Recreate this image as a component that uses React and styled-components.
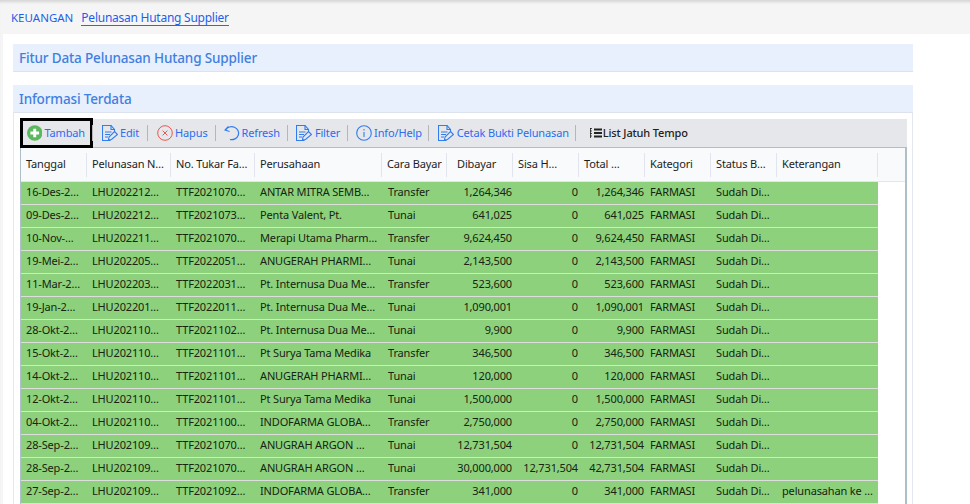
import React from 'react';
import styled, { createGlobalStyle } from 'styled-components';

const GlobalStyle = createGlobalStyle`
  html, body {
    margin: 0;
    height: 100%;
    overflow: hidden;
    background: #f5f5f5;
    font-family: "Noto Sans", "Open Sans", sans-serif;
  }
`;

const Page = styled.div`
  height: 504px;
  overflow: hidden;
  box-shadow: inset 0 4px 3px -2px #d4d4d4;
`;

const Breadcrumb = styled.nav`
  height: 34px;
  box-sizing: border-box;
  padding: 10px 0 0 11px;
  display: flex;
  align-items: flex-start;
  gap: 8px;
  color: #1f5fe8;
`;

const Crumb = styled.span`
  font-size: 11.5px;
  line-height: 16px;
`;

const CrumbLink = styled.a`
  font-size: 12px;
  line-height: 15px;
  letter-spacing: -0.25px;
  color: #1f5fe8;
  border-bottom: 1px solid #1f6cf0;
`;

const Content = styled.main`
  margin-left: 3px;
  height: 470px;
  box-sizing: border-box;
  background: #fff;
  padding: 10px 57px 0 10px;
`;

const Heading = styled.h2`
  margin: 0;
  height: 28px;
  box-sizing: border-box;
  padding-left: 6px;
  background: #e8effd;
  border-bottom: 1px solid #dde3ec;
  color: #3f7fe0;
  font-size: 13.5px;
  font-weight: 500;
  letter-spacing: -0.15px;
  line-height: 28px;
`;

const Panel = styled.section`
  margin-top: 13px;
`;

const PanelBody = styled.div`
  border: solid #e3e8f0;
  border-width: 0 1px;
  padding: 6px 5px 0 6px;
`;

const Toolbar = styled.div`
  height: 28px;
  background: #e6e7eb;
  display: flex;
  align-items: center;
`;

const ToolButton = styled.button`
  all: unset;
  display: flex;
  align-items: center;
  gap: ${({ $gap }) => $gap ?? 2}px;
  height: 100%;
  box-sizing: border-box;
  padding: 0 ${({ $pr }) => $pr ?? 7}px 0 ${({ $pl }) => $pl ?? 8}px;
  color: ${({ $dark }) => ($dark ? '#222' : '#2b6cf0')};
  font-size: 11px;
  font-weight: ${({ $dark }) => ($dark ? 500 : 400)};
  letter-spacing: -0.15px;
  white-space: nowrap;
  cursor: pointer;
`;

const FocusedButton = styled(ToolButton)`
  margin-left: 1px;
  width: 71px;
  outline: 3px solid #000;
  outline-offset: -2px;
`;

const ToolLabel = styled.span`
  padding-bottom: 2px;
`;

const Sep = styled.span`
  width: 1px;
  height: 16px;
  background: #b4b6ba;
`;

const Grid = styled.div`
  border: 1px solid #aebfca;
  border-bottom: 0;
  border-right-width: 2px;
  background: #fff;
  font-size: 11px;
  letter-spacing: -0.15px;
`;

const HeaderRow = styled.div`
  display: grid;
  grid-template-columns: 66px 84px 84px 127px 65px 66px 66px 66px 66px 66px 101px;
  height: 34px;
  box-sizing: border-box;
  background: #f8fafb;
  border-bottom: 1px solid #e2e7ec;
  align-items: center;
`;

const HeaderCell = styled.div`
  height: 24px;
  line-height: 22px;
  box-sizing: border-box;
  padding-left: ${({ $pl }) => $pl ?? 5}px;
  border-right: 1px solid #e2e5ee;
  color: #1d1d1d;
  white-space: nowrap;
`;

const Row = styled.div`
  display: grid;
  grid-template-columns: 66px 84px 84px 127px 65px 66px 66px 66px 66px 66px 101px;
  width: 857px;
  height: 23px;
  box-sizing: border-box;
  background: #8dd17d;
  border-bottom: 1px solid #dcdfdc;
`;

const Cell = styled.div`
  line-height: 20px;
  padding: 0 ${({ $num }) => ($num ? 1 : 0)}px 0 ${({ $pl }) => $pl ?? 5}px;
  color: #17240f;
  text-align: ${({ $num }) => ($num ? 'right' : 'left')};
  white-space: nowrap;
`;

const DocIcon = () => (
  <svg width="16" height="17" viewBox="0 0 16 17" fill="none" stroke="#2f7df0" strokeWidth="1.1">
    <path d="M8.5 15.5H0.5V0.5H9L12.5 4.5V6.5" />
    <path d="M9 0.5V4.5H12.5" />
    <path d="M3 7H9.5M3 9.5H8M3 12H6" />
    <path d="M12.5 6.5L15.5 9.5L9.5 14.5L6.5 15L7 12Z" />
  </svg>
);

const PlusIcon = () => (
  <svg width="16" height="16" viewBox="0 0 16 16">
    <circle cx="8" cy="8" r="8" fill="#5cb85c" />
    <path d="M8 3.5V12.5M3.5 8H12.5" stroke="#fff" strokeWidth="3" />
  </svg>
);

const CrossIcon = () => (
  <svg width="16" height="16" viewBox="0 0 16 16" fill="none" stroke="#e8574f">
    <circle cx="8" cy="8" r="7.3" />
    <path d="M5.6 5.6L10.4 10.4M10.4 5.6L5.6 10.4" />
  </svg>
);

const RefreshIcon = () => (
  <svg width="16" height="16" viewBox="0 0 16 16" fill="none" stroke="#2f7df0" strokeWidth="1.2">
    <path d="M4.5 1.5L1 5L5.5 6.5" />
    <path d="M1.5 5A7 6.5 0 1 1 6 14.5" />
  </svg>
);

const InfoIcon = () => (
  <svg width="16" height="16" viewBox="0 0 16 16" fill="none" stroke="#2f7df0" strokeWidth="1.1">
    <circle cx="8" cy="8" r="7.3" />
    <path d="M8 7V12M8 4V5.4" />
  </svg>
);

const ListIcon = () => (
  <svg width="12" height="12" viewBox="0 0 12 12" fill="none" stroke="#222">
    <path d="M4 2.5H12M4 6H12M4 9.5H12" strokeWidth="1.8" />
    <path d="M0.5 1V11M0 1.5H2M0 4H2M0 6.5H2M0 9H2" strokeWidth="0.8" />
  </svg>
);

const columns = [
  { label: 'Tanggal' },
  { label: 'Pelunasan N…' },
  { label: 'No. Tukar Fa…' },
  { label: 'Perusahaan' },
  { label: 'Cara Bayar' },
  { label: 'Dibayar', pl: 10 },
  { label: 'Sisa H…' },
  { label: 'Total …' },
  { label: 'Kategori' },
  { label: 'Status B…' },
  { label: 'Keterangan' },
];

const rows = [
  ['16-Des-2…', 'LHU202212…', 'TTF2021070…', 'ANTAR MITRA SEMB…', 'Transfer', '1,264,346', '0', '1,264,346', ''],
  ['09-Des-2…', 'LHU202212…', 'TTF2021073…', 'Penta Valent, Pt.', 'Tunai', '641,025', '0', '641,025', ''],
  ['10-Nov-…', 'LHU202211…', 'TTF2021070…', 'Merapi Utama Pharm…', 'Transfer', '9,624,450', '0', '9,624,450', ''],
  ['19-Mei-2…', 'LHU202205…', 'TTF2022051…', 'ANUGERAH PHARMI…', 'Tunai', '2,143,500', '0', '2,143,500', ''],
  ['11-Mar-2…', 'LHU202203…', 'TTF2022031…', 'Pt. Internusa Dua Me…', 'Transfer', '523,600', '0', '523,600', ''],
  ['19-Jan-2…', 'LHU202201…', 'TTF2022011…', 'Pt. Internusa Dua Me…', 'Tunai', '1,090,001', '0', '1,090,001', ''],
  ['28-Okt-2…', 'LHU202110…', 'TTF2021102…', 'Pt. Internusa Dua Me…', 'Tunai', '9,900', '0', '9,900', ''],
  ['15-Okt-2…', 'LHU202110…', 'TTF2021101…', 'Pt Surya Tama Medika', 'Transfer', '346,500', '0', '346,500', ''],
  ['14-Okt-2…', 'LHU202110…', 'TTF2021101…', 'ANUGERAH PHARMI…', 'Tunai', '120,000', '0', '120,000', ''],
  ['12-Okt-2…', 'LHU202110…', 'TTF2021101…', 'Pt Surya Tama Medika', 'Tunai', '1,500,000', '0', '1,500,000', ''],
  ['04-Okt-2…', 'LHU202110…', 'TTF2021100…', 'INDOFARMA GLOBA…', 'Transfer', '2,750,000', '0', '2,750,000', ''],
  ['28-Sep-2…', 'LHU202109…', 'TTF2021070…', 'ANUGRAH ARGON …', 'Tunai', '12,731,504', '0', '12,731,504', ''],
  ['28-Sep-2…', 'LHU202109…', 'TTF2021070…', 'ANUGRAH ARGON …', 'Tunai', '30,000,000', '12,731,504', '42,731,504', ''],
  ['27-Sep-2…', 'LHU202109…', 'TTF2021092…', 'INDOFARMA GLOBA…', 'Transfer', '341,000', '0', '341,000', 'pelunasahan ke …'],
];

export default function App() {
  return (
    <Page>
      <GlobalStyle />
      <Breadcrumb>
        <Crumb>KEUANGAN</Crumb>
        <CrumbLink>Pelunasan Hutang Supplier</CrumbLink>
      </Breadcrumb>
      <Content>
        <Heading>Fitur Data Pelunasan Hutang Supplier</Heading>
        <Panel>
          <Heading>Informasi Terdata</Heading>
          <PanelBody>
            <Toolbar>
              <FocusedButton $pl={6}><PlusIcon /><ToolLabel>Tambah</ToolLabel></FocusedButton>
              <Sep />
              <ToolButton $pl={9} $pr={8}><DocIcon /><ToolLabel>Edit</ToolLabel></ToolButton>
              <Sep />
              <ToolButton $pl={9}><CrossIcon /><ToolLabel>Hapus</ToolLabel></ToolButton>
              <Sep />
              <ToolButton><RefreshIcon /><ToolLabel>Refresh</ToolLabel></ToolButton>
              <Sep />
              <ToolButton $gap={3}><DocIcon /><ToolLabel>Filter</ToolLabel></ToolButton>
              <Sep />
              <ToolButton $pr={6}><InfoIcon /><ToolLabel>Info/Help</ToolLabel></ToolButton>
              <Sep />
              <ToolButton $pl={9} $pr={6} $gap={3}><DocIcon /><ToolLabel>Cetak Bukti Pelunasan</ToolLabel></ToolButton>
              <Sep />
              <ToolButton $dark $pl={14} $gap={1}><ListIcon /><ToolLabel>List Jatuh Tempo</ToolLabel></ToolButton>
            </Toolbar>
            <Grid>
              <HeaderRow>
                {columns.map((c) => <HeaderCell key={c.label} $pl={c.pl}>{c.label}</HeaderCell>)}
              </HeaderRow>
              {rows.map((r, i) => (
                <Row key={i}>
                  <Cell>{r[0]}</Cell>
                  <Cell>{r[1]}</Cell>
                  <Cell>{r[2]}</Cell>
                  <Cell>{r[3]}</Cell>
                  <Cell $pl={6}>{r[4]}</Cell>
                  <Cell $num>{r[5]}</Cell>
                  <Cell $num>{r[6]}</Cell>
                  <Cell $num>{r[7]}</Cell>
                  <Cell>FARMASI</Cell>
                  <Cell>Sudah Di…</Cell>
                  <Cell>{r[8]}</Cell>
                </Row>
              ))}
            </Grid>
          </PanelBody>
        </Panel>
      </Content>
    </Page>
  );
}
